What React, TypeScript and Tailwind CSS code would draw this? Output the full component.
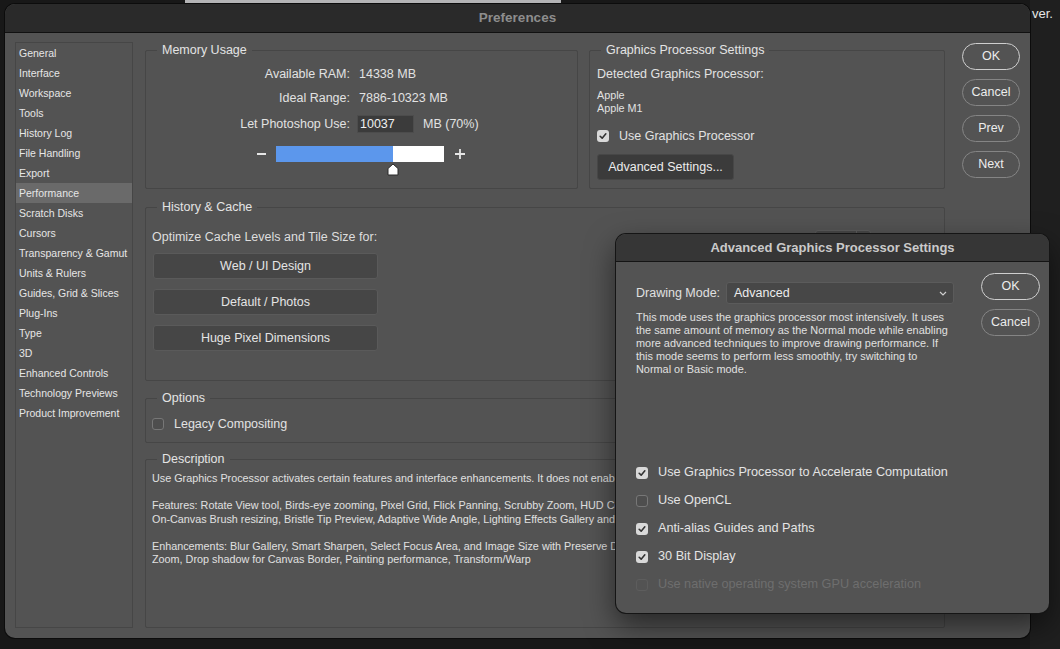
import React from 'react';
import clsx from 'clsx';

const sideItems = [
  'General',
  'Interface',
  'Workspace',
  'Tools',
  'History Log',
  'File Handling',
  'Export',
  'Performance',
  'Scratch Disks',
  'Cursors',
  'Transparency & Gamut',
  'Units & Rulers',
  'Guides, Grid & Slices',
  'Plug-Ins',
  'Type',
  '3D',
  'Enhanced Controls',
  'Technology Previews',
  'Product Improvement',
];

const Check = ({ checked, disabled }: { checked?: boolean; disabled?: boolean }) => (
  <span
    className={clsx(
      'w-[12px] h-[12px] rounded-[3px] flex items-center justify-center shrink-0',
      checked && 'bg-[#d9d9d9]',
      !checked && disabled && 'border border-[#5d5d5d]',
      !checked && !disabled && 'border border-[#777] bg-[#4e4e4e]'
    )}
  >
    {checked && (
      <svg viewBox="0 0 12 12" className="w-[10px] h-[10px]">
        <path d="M2.6 6.3 L5 8.6 L9.4 3.4" stroke="#333" strokeWidth="1.9" fill="none" strokeLinecap="round" strokeLinejoin="round" />
      </svg>
    )}
  </span>
);

const Group = ({ title, className, children }: { title: string; className?: string; children?: React.ReactNode }) => (
  <fieldset className={clsx('border border-[#464646] rounded-[2px] min-w-0', className)}>
    <legend className="ml-[11px] px-[5px] text-[12.5px] leading-[16px] text-[#e4e4e4]">{title}</legend>
    {children}
  </fieldset>
);

const Pill = ({ label, primary }: { label: string; primary?: boolean }) => (
  <button
    className={clsx(
      'h-[27px] w-full rounded-full text-[12.5px] text-[#ececec] flex items-center justify-center',
      primary ? 'border-[1.5px] border-[#cfcfcf]' : 'border border-[#858585]'
    )}
  >
    {label}
  </button>
);

const CacheButton = ({ label }: { label: string }) => (
  <button className="h-[26px] w-[225px] bg-[#464646] border border-[#5a5a5a] rounded-[3px] text-[12.5px] text-[#e4e4e4] flex items-center justify-center">
    {label}
  </button>
);

// only the part left of the dialog is visible
const descText = `Use Graphics Processor activates certain features and interface enhancements. It does not enab

Features: Rotate View tool, Birds-eye zooming, Pixel Grid, Flick Panning, Scrubby Zoom, HUD Co
On-Canvas Brush resizing, Bristle Tip Preview, Adaptive Wide Angle, Lighting Effects Gallery and

Enhancements: Blur Gallery, Smart Sharpen, Select Focus Area, and Image Size with Preserve De
Zoom, Drop shadow for Canvas Border, Painting performance, Transform/Warp`;

const modeText = `This mode uses the graphics processor most intensively.  It uses
the same amount of memory as the Normal mode while enabling
more advanced techniques to improve drawing performance.  If
this mode seems to perform less smoothly, try switching to
Normal or Basic mode.`;

const dialogChecks = [
  { label: 'Use Graphics Processor to Accelerate Computation', checked: true },
  { label: 'Use OpenCL', checked: false },
  { label: 'Anti-alias Guides and Paths', checked: true },
  { label: '30 Bit Display', checked: true },
  { label: 'Use native operating system GPU acceleration', checked: false, disabled: true },
];

export default function App() {
  return (
    <div className="relative w-[1060px] h-[649px] overflow-hidden bg-[#181818] font-['Liberation_Sans',Arial,sans-serif] text-[#e2e2e2]">
      {/* background bits from other windows */}
      <div className="absolute top-0 left-[185px] w-[376px] h-[3px] bg-[#b4b4b6]" />
      <div className="absolute top-0 right-0 w-[30px] h-[649px] bg-[#1f1f1f]" />
      <span className="absolute left-[1032px] top-[4px] text-[13px] text-[#e6e6e6]">ver.</span>

      {/* Preferences window */}
      <div className="absolute left-[5px] top-[4px] w-[1025px] h-[634px] rounded-[10px] overflow-hidden bg-[#535353] flex flex-col shadow-[0_0_0_1px_#0c0c0c]">
        <div className="h-[29px] shrink-0 bg-[#2a2a2a] border-b border-[#111] flex items-center justify-center">
          <span className="text-[13.5px] font-bold text-[#8d8d8d]">Preferences</span>
        </div>

        <div className="flex flex-1 pl-[10px] pt-[9px] pb-[10px]">
          {/* sidebar */}
          <div className="w-[118px] border border-[#464646]">
            {sideItems.map((item) => (
              <div
                key={item}
                className={clsx(
                  'h-[20px] pl-[3px] flex items-center text-[10.5px] leading-[12px] text-[#e6e6e6]',
                  item === 'Performance' && 'bg-[#6a6a6a]'
                )}
              >
                {item}
              </div>
            ))}
          </div>

          {/* main content */}
          <div className="ml-[12px] w-[800px] flex flex-col">
            <div className="flex gap-[11px]">
              <Group title="Memory Usage" className="w-[433px] h-[147px]">
                <div className="grid grid-cols-[204px_1fr] gap-x-[7px] mt-[6px] text-[12.5px]">
                  <span className="h-[20px] flex items-center justify-end">Available RAM:</span>
                  <span className="h-[20px] flex items-center pl-[2px]">14338 MB</span>
                  <span className="h-[20px] mt-[4px] flex items-center justify-end">Ideal Range:</span>
                  <span className="h-[20px] mt-[4px] flex items-center pl-[2px]">7886-10323 MB</span>
                  <span className="h-[20px] mt-[6px] flex items-center justify-end">Let Photoshop Use:</span>
                  <span className="h-[20px] mt-[6px] flex items-center">
                    <span className="w-[57px] h-[18px] bg-[#3b3b3b] border border-[#4c4c4c] pl-[2px] leading-[16px] text-[#f0f0f0]">10037</span>
                    <span className="ml-[9px]">MB (70%)</span>
                  </span>
                </div>
                <div className="flex items-center mt-[12px] pl-[111px]">
                  <span className="w-[9px] h-[2px] bg-[#e6e6e6]" />
                  <div className="relative ml-[10px] w-[168px] h-[16px] bg-white flex">
                    <div className="w-[117px] h-full bg-[#5c97ec]" />
                    <svg viewBox="0 0 12 13" className="absolute left-[111px] top-[17px] w-[12px] h-[13px]">
                      <path d="M6 1 L11 5.5 L11 12 L1 12 L1 5.5 Z" fill="#fff" stroke="#2a2a2a" strokeWidth="1" strokeLinejoin="round" />
                    </svg>
                  </div>
                  <svg viewBox="0 0 10 10" className="ml-[11px] w-[10px] h-[10px]">
                    <path d="M5 0 V10 M0 5 H10" stroke="#e6e6e6" strokeWidth="1.8" />
                  </svg>
                </div>
              </Group>

              <Group title="Graphics Processor Settings" className="w-[356px] h-[147px]">
                <div className="pl-[7px]">
                  <div className="h-[20px] mt-[6px] flex items-center text-[12.5px]">Detected Graphics Processor:</div>
                  <div className="mt-[5px] text-[10.8px] leading-[13px]">
                    <div>Apple</div>
                    <div>Apple M1</div>
                  </div>
                  <div className="h-[20px] mt-[11px] flex items-center gap-[10px] text-[12.5px]">
                    <Check checked />
                    <span>Use Graphics Processor</span>
                  </div>
                  <button className="mt-[8px] h-[26px] w-[137px] bg-[#3b3b3b] border border-[#474747] rounded-[3px] text-[12.5px] text-[#ececec]">
                    Advanced Settings...
                  </button>
                </div>
              </Group>
            </div>

            <Group title="History & Cache" className="mt-[10px] h-[182px]">
              <div className="flex">
                <div className="pl-[6px] mt-[12px]">
                  <div className="h-[20px] flex items-center text-[12.5px] text-[#dedede]">Optimize Cache Levels and Tile Size for:</div>
                  <div className="mt-[6px] ml-[1px] flex flex-col gap-[10px]">
                    <CacheButton label="Web / UI Design" />
                    <CacheButton label="Default / Photos" />
                    <CacheButton label="Huge Pixel Dimensions" />
                  </div>
                </div>
                {/* history states field, mostly covered by the dialog */}
                <div className="ml-auto mr-[73px] mt-[15px] flex w-[56px] h-[20px] border border-[#5c5c5c] rounded-[3px] bg-[#474747]">
                  <span className="flex-1" />
                  <span className="w-[14px] border-l border-[#5c5c5c]" />
                </div>
              </div>
            </Group>

            <Group title="Options" className="mt-[9px] h-[53px]">
              <div className="h-[20px] mt-[8px] pl-[6px] flex items-center gap-[10px] text-[12.5px]">
                <Check />
                <span>Legacy Compositing</span>
              </div>
            </Group>

            <Group title="Description" className="mt-[8px] flex-1">
              <div className="mt-[5px] ml-[6px] w-[463px] text-[10.8px] leading-[13.5px] whitespace-pre overflow-hidden text-[#e0e0e0]">
                {descText}
              </div>
            </Group>
          </div>

          {/* right buttons */}
          <div className="ml-[17px] w-[58px] mt-[1px] flex flex-col gap-[9px]">
            <Pill label="OK" primary />
            <Pill label="Cancel" />
            <Pill label="Prev" />
            <Pill label="Next" />
          </div>
        </div>
      </div>

      {/* Advanced Graphics Processor Settings dialog */}
      <div className="absolute left-[616px] top-[234px] w-[433px] h-[379px] rounded-[10px] overflow-hidden bg-[#535353] flex flex-col shadow-[0_0_0_1px_#151515,0_12px_30px_rgba(0,0,0,0.55)]">
        <div className="h-[28px] shrink-0 bg-[#363636] border-b border-[#141414] flex items-center justify-center">
          <span className="text-[13px] font-bold text-[#cacaca]">Advanced Graphics Processor Settings</span>
        </div>
        <div className="flex flex-1">
          <div className="pl-[20px] pt-[20px] w-[338px]">
            <div className="flex items-center h-[22px]">
              <span className="text-[12.5px] text-[#e0e0e0]">Drawing Mode:</span>
              <div className="ml-auto w-[228px] h-[22px] bg-[#474747] border border-[#5b5b5b] rounded-[3px] flex items-center pl-[7px] pr-[6px]">
                <span className="text-[12.5px] text-[#ececec]">Advanced</span>
                <svg viewBox="0 0 8 5" className="ml-auto w-[8px] h-[5px]">
                  <path d="M1 1 L4 4 L7 1" stroke="#cfcfcf" strokeWidth="1.2" fill="none" />
                </svg>
              </div>
            </div>
            <p className="mt-[7px] text-[10.9px] leading-[13px] whitespace-pre-line text-[#e0e0e0]">{modeText}</p>
            <div className="mt-[87px] flex flex-col gap-[8px]">
              {dialogChecks.map((c) => (
                <div key={c.label} className="h-[20px] flex items-center gap-[10px] text-[12.7px] whitespace-nowrap">
                  <Check checked={c.checked} disabled={c.disabled} />
                  <span className={c.disabled ? 'text-[#6e6e6e]' : 'text-[#e4e4e4]'}>{c.label}</span>
                </div>
              ))}
            </div>
          </div>
          <div className="ml-[27px] w-[59px] pt-[11px] flex flex-col gap-[9px]">
            <Pill label="OK" primary />
            <Pill label="Cancel" />
          </div>
        </div>
      </div>
    </div>
  );
}
